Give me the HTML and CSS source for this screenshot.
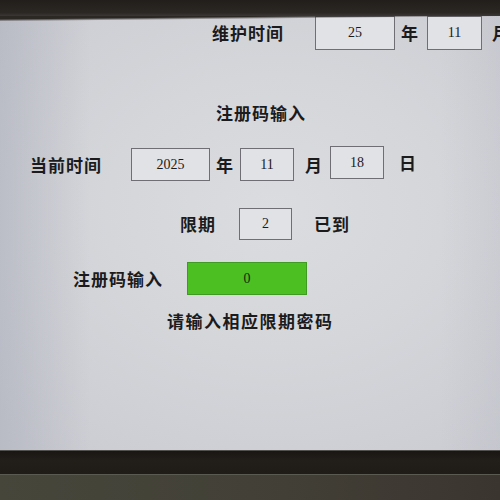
FILE: index.html
```html
<!DOCTYPE html>
<html lang="zh-CN">
<head>
<meta charset="utf-8">
<title>注册码输入</title>
<link rel="stylesheet" href="styles.css">
</head>
<body>
<div class="panel">
  <div class="bezel-top"></div>
  <main class="screen">
    <div class="row row-maint">
      <span class="lbl">维护时间</span>
      <div class="field w80 ml31">25</div>
      <span class="lbl ml6">年</span>
      <div class="field w55 ml8">11</div>
      <span class="lbl ml10">月</span>
    </div>

    <h1 class="title">注册码输入</h1>

    <div class="row row-now">
      <span class="lbl">当前时间</span>
      <div class="field w79 ml29">2025</div>
      <span class="lbl ml6">年</span>
      <div class="field w54 ml6">11</div>
      <span class="lbl ml11">月</span>
      <div class="field w54 ml7 up">18</div>
      <span class="lbl ml15 up">日</span>
    </div>

    <div class="row row-limit">
      <span class="lbl">限期</span>
      <div class="field w53 ml23">2</div>
      <span class="lbl ml22">已到</span>
    </div>

    <div class="row row-code">
      <span class="lbl">注册码输入</span>
      <div class="field field-ok w120 ml24">0</div>
    </div>

    <p class="hint">请输入相应限期密码</p>
  </main>
  <div class="bezel-bottom"></div>
  <div class="frame"></div>
</div>
</body>
</html>
```

FILE: styles.css
```css
html, body {
  margin: 0;
  padding: 0;
}

body {
  width: 500px;
  height: 500px;
  overflow: hidden;
  background: #2a2622;
}

.panel {
  display: flex;
  flex-direction: column;
  width: 500px;
  height: 500px;
}

.bezel-top {
  height: 16px;
  flex-shrink: 0;
  background: linear-gradient(to bottom, #211e1b 0%, #2b2824 80%, #3a3836 100%);
}

.screen {
  position: relative;
  height: 434px;
  flex-shrink: 0;
  overflow: hidden;
  display: flex;
  flex-direction: column;
  background:
    linear-gradient(to right, rgba(150, 154, 172, 0.35) 0%, rgba(150, 154, 172, 0) 18%, rgba(150, 154, 172, 0) 88%, rgba(150, 154, 172, 0.12) 100%),
    radial-gradient(ellipse 75% 70% at 55% 45%, #dbdcdf 0%, #d5d6da 45%, #cbccd2 100%);
  font-family: "Noto Sans CJK SC", "Noto Sans", sans-serif;
  color: #1b1b1d;
}

/* slanted shadow of the upper bezel edge */
.screen::before {
  content: "";
  position: absolute;
  left: 0;
  top: 0;
  width: 100%;
  height: 5px;
  background: linear-gradient(to bottom right, #2b2824 0%, #2b2824 30%, rgba(43, 40, 36, 0) 55%);
}

.row {
  display: flex;
  align-items: center;
}

.row > * {
  flex-shrink: 0;
}

.lbl {
  font-size: 17px;
  line-height: 24px;
  font-weight: 600;
  letter-spacing: 1px;
  white-space: nowrap;
}

.field {
  box-sizing: border-box;
  height: 33px;
  display: flex;
  align-items: center;
  justify-content: center;
  background: #e1e2e6;
  border: 1px solid #6e6e74;
  font-family: "Liberation Serif", "DejaVu Serif", serif;
  font-size: 14px;
  color: #1a1a1a;
}

.field-ok {
  background: #4cbf22;
  border-color: #3f9a22;
  color: #142a0a;
}

.up {
  position: relative;
  top: -2px;
}

.w53 { width: 53px; }
.w54 { width: 54px; }
.w55 { width: 55px; }
.w79 { width: 79px; }
.w80 { width: 80px; }
.w120 { width: 120px; }

.ml6 { margin-left: 6px; }
.ml7 { margin-left: 7px; }
.ml8 { margin-left: 8px; }
.ml10 { margin-left: 10px; }
.ml11 { margin-left: 11px; }
.ml15 { margin-left: 15px; }
.ml22 { margin-left: 22px; }
.ml23 { margin-left: 23px; }
.ml24 { margin-left: 24px; }
.ml29 { margin-left: 29px; }
.ml31 { margin-left: 31px; }

.row-maint {
  padding-left: 212px;
}

.row-maint .field {
  height: 34px;
}

.title {
  margin: 51px 0 0 216px;
  font-size: 17px;
  line-height: 24px;
  font-weight: 600;
  letter-spacing: 1px;
}

.row-now {
  margin-top: 23px;
  padding-left: 30px;
}

.row-limit {
  margin-top: 27px;
  padding-left: 180px;
}

.row-limit .field {
  height: 32px;
}

.row-code {
  margin-top: 22px;
  padding-left: 73px;
}

.hint {
  margin: 14px 0 0 167px;
  font-size: 17px;
  line-height: 24px;
  font-weight: 600;
  letter-spacing: 1.5px;
}

.bezel-bottom {
  height: 24px;
  flex-shrink: 0;
  box-sizing: border-box;
  border-top: 1px solid #54524f;
  background: linear-gradient(to bottom, #191613 0%, #221e1a 40%, #1f1b17 100%);
}

.frame {
  flex: 1;
  background: linear-gradient(to right, #46463b 0%, #434137 50%, #3b3530 100%);
  border-top: 1px solid #5a5a50;
}
```
